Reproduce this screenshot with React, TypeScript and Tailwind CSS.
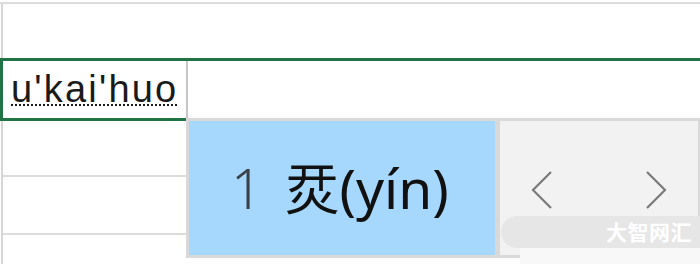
export default function App() {
  return (
    <div className="relative w-[700px] h-[264px] overflow-hidden bg-white font-['Liberation_Sans',sans-serif]">
      {/* 表格：第一行 */}
      <div className="h-[58px] flex flex-col">
        <div className="h-[2px]" />
        <div className="h-[2px] bg-[#dcdcdc]" />
        <div className="flex-1 ml-px border-l-2 border-[#d6d6d6]" />
      </div>

      {/* 选中行 */}
      <div className="h-[63px] border-t-[3px] border-[#217346] flex">
        <div className="w-[188px] h-[60px] border-l-[3px] border-b-[3px] border-[#217346] flex">
          <div className="flex-1 pl-[8px] pt-[9px] overflow-hidden">
            <span className="text-[38px] leading-[38px] tracking-[2.2px] text-[#1a1a1a] underline decoration-dotted decoration-2 underline-offset-[2px] whitespace-nowrap">
              u'kai'huo
            </span>
          </div>
          <div className="w-[2px] bg-[#c6c6c6]" />
        </div>
      </div>

      {/* 下面几行 */}
      <div className="w-[186px] ml-px border-l-2 border-[#d6d6d6] flex flex-col">
        <div className="h-[54px]" />
        <div className="h-[2px] bg-[#dcdcdc]" />
        <div className="h-[56px]" />
        <div className="h-[2px] bg-[#dcdcdc]" />
        <div className="h-[30px]" />
      </div>

      {/* 输入法候选框 */}
      <div className="absolute left-[186px] top-[118px] w-[514px] h-[140px] border-[3px] border-r-2 border-[#d9d9d9] flex bg-[#d9d9d9]">
        <div className="w-[306px] bg-[#a6d7fd] flex items-center pl-[42px] pb-[2px]">
          <span className="text-[55px] leading-none whitespace-nowrap font-['Noto_Sans','Noto_Sans_CJK_SC',sans-serif]">
            <span className="text-[#3a4148] font-light">1</span>
            <span className="ml-[22px] text-[#111111]">烎(yín)</span>
          </span>
        </div>
        <div className="w-[5px]" />
        <div className="flex-1 bg-[#f2f2f2] flex items-center justify-between px-[31px] pt-[3px]">
          <svg width="22" height="38" viewBox="0 0 22 38" fill="none">
            <polyline points="20,1 2,19 20,37" stroke="#7a7a7a" strokeWidth="2.2" />
          </svg>
          <svg width="22" height="38" viewBox="0 0 22 38" fill="none">
            <polyline points="2,1 20,19 2,37" stroke="#7a7a7a" strokeWidth="2.2" />
          </svg>
        </div>
      </div>

      {/* 水印 */}
      <div className="absolute left-[520px] top-[240px] w-[190px] h-[30px] bg-[#f8f8f8]" />
      <div className="absolute left-[501px] top-[216px] w-[230px] h-[32px] rounded-full bg-[#e6e6e6] flex items-center pl-[105px]">
        <span className="text-white text-[21px] font-bold tracking-[0.5px] font-['Noto_Sans_CJK_SC',sans-serif]">
          大智网汇
        </span>
      </div>
    </div>
  );
}
